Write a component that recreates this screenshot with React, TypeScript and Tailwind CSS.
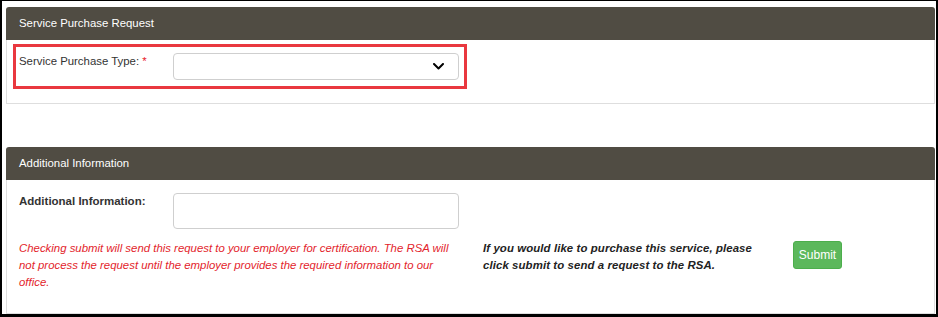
import React from 'react';

const HEADER_BG = 'bg-[#504c43]';

function PanelHeader({ title }: { title: string }) {
  return (
    <div className={`h-[33px] ${HEADER_BG} rounded-t-[3px] pl-[13px] flex items-center text-[11.4px] text-white`}>
      {title}
    </div>
  );
}

function Chevron() {
  return (
    <svg width="11" height="7" viewBox="0 0 11 7" className="text-black">
      <path d="M1 1 L5.5 5.5 L10 1" fill="none" stroke="currentColor" strokeWidth="2" strokeLinecap="round" strokeLinejoin="round" />
    </svg>
  );
}

export default function App() {
  return (
    <div className="w-[938px] h-[317px] bg-white border-black border-t border-x-2 border-b-[3px] overflow-hidden font-['Liberation_Sans',Arial,sans-serif] flex flex-col">
      {/* Service purchase request */}
      <div className="ml-[4px] mr-[1px] mt-[6px]">
        <PanelHeader title="Service Purchase Request" />
        <div className="h-[64px] border border-t-0 border-[#dedede] pt-[4px] pl-[6px]">
          <div className="w-[454px] h-[45px] border-[3px] border-[#e9383f] flex items-start pt-[6px] pl-[3px]">
            <div className="w-[154px] text-[11.4px] leading-[17px] text-[#333]">
              Service Purchase Type: <span className="text-[#e8202a]">*</span>
            </div>
            <div className="w-[286px] h-[27px] border border-[#cfcfcf] rounded-[4px] bg-white flex items-center justify-end pr-[14px]">
              <Chevron />
            </div>
          </div>
        </div>
      </div>

      {/* Additional information */}
      <div className="ml-[4px] mr-[1px] mt-[43px] flex-1 flex flex-col">
        <PanelHeader title="Additional Information" />
        <div className="flex-1 border border-t-0 border-[#dedede] pt-[13px] pl-[12px]">
          <div className="flex items-start">
            <div className="w-[154px] text-[11.5px] leading-[17px] font-bold text-[#333]">Additional Information:</div>
            <div className="w-[286px] h-[36px] border border-[#cfcfcf] rounded-[4px] bg-white" />
          </div>
          <div className="flex items-start mt-[11px]">
            <p className="w-[440px] text-[11.4px] leading-[17px] italic text-[#e3242b]">
              Checking submit will send this request to your employer for certification. The RSA will not process the request until the employer provides the required information to our office.
            </p>
            <p className="ml-[24px] w-[272px] text-[11.4px] leading-[17px] italic font-bold text-[#222] tracking-[0.1px]">
              If you would like to purchase this service, please click submit to send a request to the RSA.
            </p>
            <button className="ml-[38px] mt-[1px] w-[49px] h-[28px] rounded-[3px] bg-[#5cb85c] border border-[#4cae4c] text-white text-[12px]">
              Submit
            </button>
          </div>
        </div>
      </div>
    </div>
  );
}
